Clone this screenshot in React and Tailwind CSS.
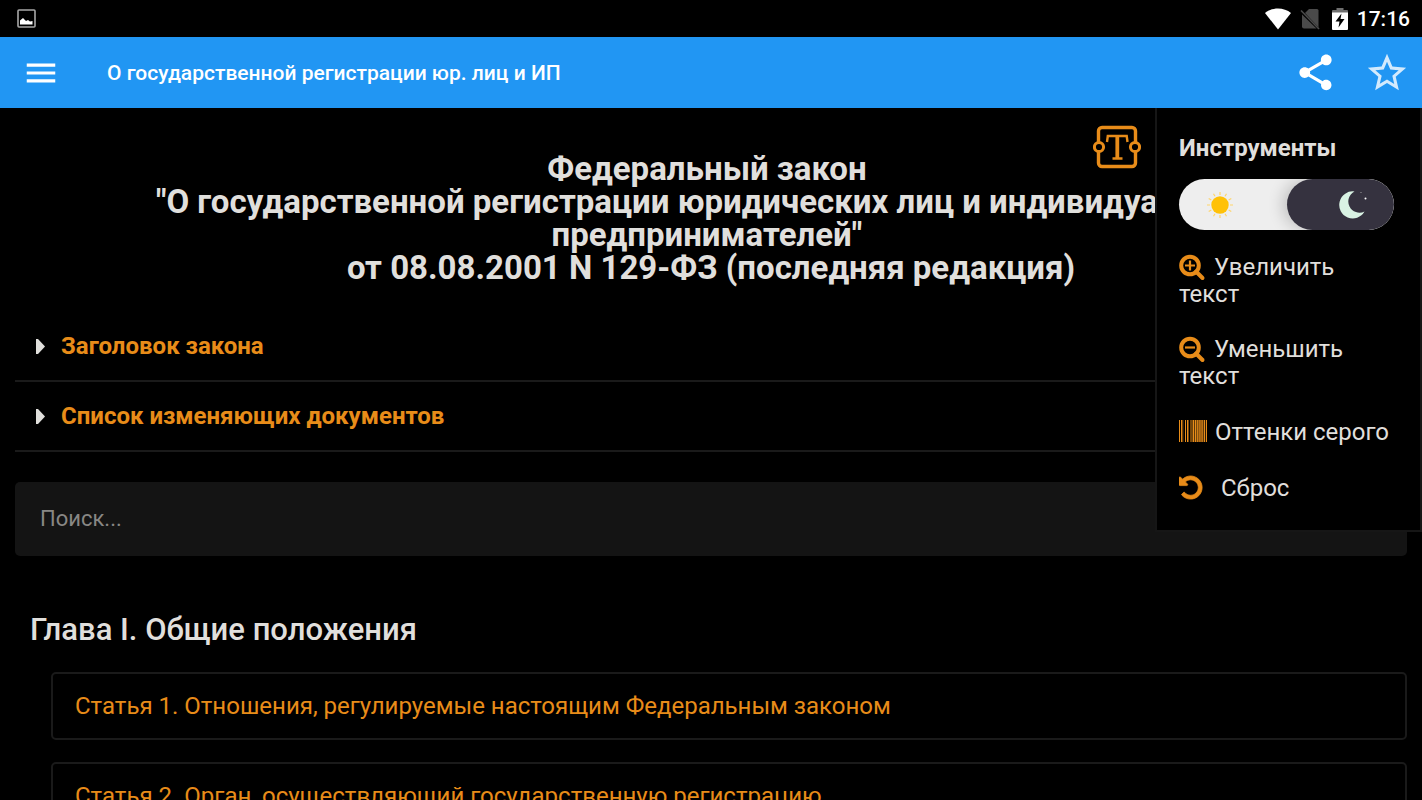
import React, { useState } from "react";
import { MdMenu, MdShare, MdStarBorder } from "react-icons/md";

const documentSections = [
  { id: "header", title: "Заголовок закона" },
  { id: "changes", title: "Список изменяющих документов" },
];

const articles = [
  "Статья 1. Отношения, регулируемые настоящим Федеральным законом",
  "Статья 2. Орган, осуществляющий государственную регистрацию",
];

function StatusBar() {
  return (
    <div className="flex h-[37px] shrink-0 items-center justify-between bg-black pl-[17px] pr-3 text-white">
      <svg className="h-[19px] w-[19px]" viewBox="0 0 19 19" aria-hidden="true">
        <rect x="1" y="1" width="17" height="17" rx="1" fill="none" stroke="#a8a8a8" strokeWidth="1.6" />
        <path d="M3 15.500v-4l3-2.500 3 3 2-1 2 1.500 2.500-.5 0 3.500z" fill="#fff" />
      </svg>
      <div className="flex items-center">
        <svg className="h-[22px] w-[26px]" viewBox="0 0 26 22" aria-hidden="true">
          <path d="M0 5C7-1 19-1 26 5L13 21.500z" fill="#fff" />
        </svg>
        <svg className="ml-[9px] h-[22px] w-5" viewBox="0 0 20 22" aria-hidden="true">
          <path d="M9 1h8a1.500 1.500 0 0 1 1.500 1.500v17L5 5z" fill="#4a4a4a" />
          <path d="M2 6.500L16.500 20.500H4A2 2 0 0 1 2 18.500z" fill="#4a4a4a" />
          <path d="M1 2.500L19 21" stroke="#4a4a4a" strokeWidth="1.6" />
        </svg>
        <svg className="ml-3 h-[22px] w-4" viewBox="0 0 16 22" aria-hidden="true">
          <path d="M4.500 0h7v2H15a1 1 0 0 1 1 1v2H0V3a1 1 0 0 1 1-1h3.500z" fill="#6f6f6f" />
          <path d="M0 4.500h16V21a1 1 0 0 1-1 1H1a1 1 0 0 1-1-1z" fill="#fff" />
          <path d="M9.500 5.500L3.500 13.500h4L6.500 19.500l6-8.500h-4z" fill="#000" />
        </svg>
        <span className="ml-[9px] text-[21px] leading-6 font-medium">17:16</span>
      </div>
    </div>
  );
}

function AppBar() {
  return (
    <header className="flex h-[71px] shrink-0 items-center bg-[#2196f3] pl-[22px] pr-3 text-white">
      <button type="button" aria-label="Меню">
        <MdMenu className="h-[38px] w-[38px]" />
      </button>
      <h1 className="ml-[47px] grow text-[21px] leading-7 font-medium">
        О государственной регистрации юр. лиц и ИП
      </h1>
      <button type="button" aria-label="Поделиться">
        <MdShare className="h-[43px] w-[43px]" />
      </button>
      <button type="button" aria-label="В избранное" className="ml-[27px]">
        <MdStarBorder className="h-[46px] w-[46px] text-[#d3eafd]" />
      </button>
    </header>
  );
}

function TextSettingsIcon() {
  return (
    <svg className="h-[44px] w-12" viewBox="0 0 48 44" fill="none" stroke="#e88c19" aria-hidden="true">
      <path
        d="M5.500 17V6A3.500 3.500 0 0 1 9 2.500h30A3.500 3.500 0 0 1 42.500 6v11M42.500 27v11a3.500 3.500 0 0 1-3.500 3.500H9A3.500 3.500 0 0 1 5.500 38V27"
        strokeWidth="3.400"
      />
      <circle cx="6" cy="22" r="4.600" strokeWidth="3" />
      <circle cx="42" cy="22" r="4.600" strokeWidth="3" />
      <path d="M14 17l.8-6h18.900l.8 6M19.500 33.500h10" strokeWidth="2.400" />
      <path d="M24.300 10v23.500" strokeWidth="3.800" />
    </svg>
  );
}

function ZoomIcon({ plus = false }) {
  return (
    <svg
      className="mr-2 inline-block h-[27px] w-[27px] align-[-6px]"
      viewBox="0 0 27 27"
      fill="none"
      stroke="#e88c19"
      aria-hidden="true"
    >
      <circle cx="11" cy="11.500" r="8.800" strokeWidth="4" />
      <path d="M17 17.500l6.500 6.500" strokeWidth="4" strokeLinecap="round" />
      <path d={plus ? "M6 11.500h10M11 6.500v10" : "M6 11.500h10"} strokeWidth="2.200" />
    </svg>
  );
}

function BarcodeIcon() {
  const bars = [
    [0, 1],
    [2, 1],
    [3.500, 0.7],
    [6, 1],
    [8, 1.500],
    [11.500, 1],
    [13.500, 1.500],
    [15.600, 1.400],
    [17.500, 1.400],
    [19.400, 1.400],
    [21.300, 1.400],
    [23.200, 1.200],
    [25, 1.200],
    [27, 1],
  ];
  return (
    <svg
      className="mr-2 inline-block h-[22px] w-7 align-[-2px]"
      viewBox="0 0 28 22"
      fill="#e88c19"
      aria-hidden="true"
    >
      {bars.map(([x, w]) => (
        <rect key={x} x={x} y="0" width={w} height="22" />
      ))}
    </svg>
  );
}

function ResetIcon() {
  return (
    <svg
      className="mr-[15px] inline-block h-[27px] w-[27px] align-[-6px]"
      viewBox="128 64 1792 1792"
      fill="#e88c19"
      stroke="#e88c19"
      strokeWidth="50"
      aria-hidden="true"
    >
      <path d="M1664 896q0 156-61 298t-164 245-245 164-298 61q-172 0-327-72.500t-264-204.500q-7-10-6.500-22.500t8.500-20.500l137-138q10-9 25-9 16 2 23 12 73 95 179 147t225 52q104 0 198.500-40.500t163.500-109.500 109.500-163.500 40.500-198.500-40.500-198.500-109.500-163.500-163.500-109.500-198.500-40.500q-98 0-188 35.500t-160 101.500l137 138q31 30 14 69-17 40-59 40h-448q-26 0-45-19t-19-45v-448q0-42 40-59 39-17 69 14l130 129q107-101 244.500-156.500t284.500-55.500q156 0 298 61t245 164 164 245 61 298z" />
    </svg>
  );
}

function ThemeToggle() {
  const [dark, setDark] = useState(true);

  return (
    <label className="mt-[17px] flex h-[51px] w-full cursor-pointer overflow-hidden rounded-full bg-[#eeeeee]">
      <input
        type="checkbox"
        className="sr-only"
        aria-label="Тёмная тема"
        checked={dark}
        onChange={(e) => setDark(e.target.checked)}
      />
      <span className="flex w-1/2 items-center pl-7">
        <svg className="h-[26px] w-[26px]" viewBox="0 0 26 26" aria-hidden="true">
          <circle cx="13" cy="13" r="8.700" fill="#ffc107" />
          <path
            d="M13 0v3M13 23v3M0 13h3M23 13h3M6.500 1.700l1.500 2.600M18 21.700l1.500 2.600M1.700 6.500l2.600 1.500M21.700 18l2.600 1.500M19.500 1.700L18 4.300M8 21.700l-1.500 2.600M24.300 6.500L21.700 8M4.300 18l-2.600 1.500"
            stroke="#ffd56b"
            strokeWidth="1.200"
          />
        </svg>
      </span>
      <span className="flex w-1/2 items-center justify-end rounded-full bg-[#35323f] pr-[27px] shadow-[-4px_0_16px_rgba(0,0,0,0.2)]">
        <svg className="h-7 w-7" viewBox="0 0 28 28" aria-hidden="true">
          <path d="M15.500.500A13.500 13.500 0 1 0 25.500 20.500A11 11 0 0 1 15.500.500z" fill="#d9f3e4" />
          <circle cx="26.500" cy="7.500" r="1" fill="#fff" />
          <circle cx="22" cy="1.500" r=".6" fill="#aaa" />
        </svg>
      </span>
    </label>
  );
}

function ToolsPanel() {
  return (
    <aside className="absolute top-0 right-0 w-[267px] border-2 border-t-0 border-[#161616] bg-black pt-[27px] pr-[26px] pb-7 pl-[22px] text-[24px] leading-[27px]">
      <h2 className="font-bold">Инструменты</h2>
      <ThemeToggle />
      <button type="button" className="mt-6 block w-full text-left">
        <ZoomIcon plus />
        Увеличить текст
      </button>
      <button type="button" className="mt-7 block w-full text-left">
        <ZoomIcon />
        Уменьшить текст
      </button>
      <button type="button" className="mt-[29px] block w-full text-left whitespace-nowrap">
        <BarcodeIcon />
        Оттенки серого
      </button>
      <button type="button" className="mt-[29px] block w-full text-left">
        <ResetIcon />
        Сброс
      </button>
    </aside>
  );
}

function App() {
  const [search, setSearch] = useState("");

  return (
    <div className="flex h-screen flex-col overflow-hidden bg-black font-[Roboto,sans-serif] text-[#e0dfdc]">
      <StatusBar />
      <AppBar />

      <main className="relative min-h-0 grow overflow-hidden px-[15px] pt-11">
        <h2 className="text-center text-[33px] leading-[33px] font-bold">
          Федеральный закон&nbsp;
          <br />
          "О государственной регистрации юридических лиц и индивидуальных&nbsp;
          <br />
          предпринимателей"&nbsp;
          <br />
          от 08.08.2001 N 129-ФЗ (последняя редакция)
        </h2>

        <div className="mt-7">
          {documentSections.map((section) => (
            <button
              key={section.id}
              type="button"
              className="flex h-[70px] w-full items-center border-b-2 border-[#1a1a1a] pl-[21px] text-left"
            >
              <svg className="h-[15px] w-[9px]" viewBox="0 0 9 15" aria-hidden="true">
                <path d="M0 0h2L9 7.500L2 15H0z" fill="#e0dfdc" />
              </svg>
              <span className="ml-4 text-[24px] leading-7 font-bold text-[#e88c19]">
                {section.title}
              </span>
            </button>
          ))}
        </div>

        <input
          type="search"
          aria-label="Поиск"
          placeholder="Поиск..."
          value={search}
          onChange={(e) => setSearch(e.target.value)}
          className="mt-[30px] block h-[74px] w-full rounded-[5px] bg-[#141414] px-[25px] pb-0.5 text-[22px] placeholder:text-[#888784] focus:outline-none"
        />

        <h3 className="mt-14 pl-[15px] text-[31px] leading-9 font-medium">
          Глава I. Общие положения
        </h3>

        <ul className="mt-6 space-y-[22px] pl-9">
          {articles.map((article) => (
            <li key={article}>
              <a
                href="#"
                className="flex h-[68px] items-center rounded-[5px] border-2 border-[#1a1a1a] px-[22px] text-[24px] leading-7 text-[#e88c19]"
              >
                {article}
              </a>
            </li>
          ))}
        </ul>

        <button
          type="button"
          aria-label="Настройки текста"
          className="absolute top-[17px] right-[281px]"
        >
          <TextSettingsIcon />
        </button>
        <ToolsPanel />
      </main>
    </div>
  );
}

export default App;
